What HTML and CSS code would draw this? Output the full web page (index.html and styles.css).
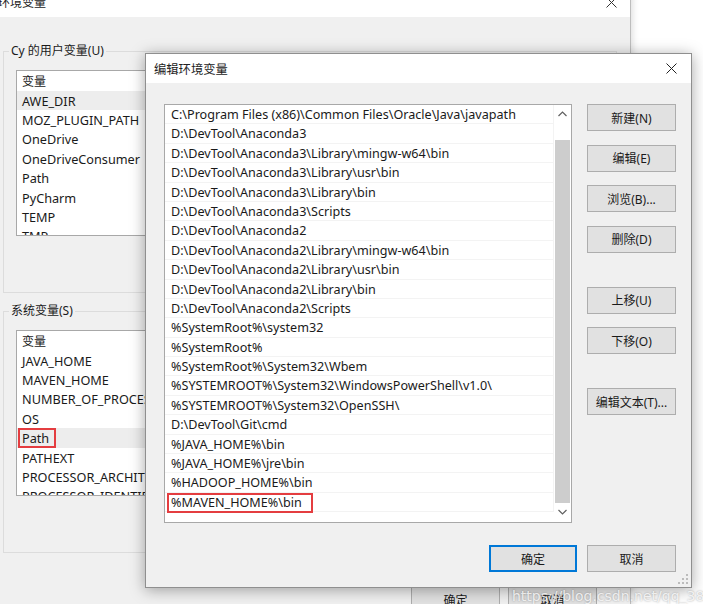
FILE: index.html
```html
<!DOCTYPE html>
<html lang="zh-CN">
<head>
    <meta charset="UTF-8">
    <title>编辑环境变量</title>
    <link rel="stylesheet" href="styles.css">
</head>
<body>
<div class="desktop">

    <!-- parent window: 环境变量 -->
    <div class="parent-win">
        <div class="titlebar">
            <span class="title">环境变量</span>
            <svg class="close" width="11" height="11" viewBox="0 0 11 11"><path d="M0.5 0.5 L10.5 10.5 M10.5 0.5 L0.5 10.5" stroke="#333" stroke-width="1"/></svg>
        </div>
        <div class="parent-body">
            <fieldset class="group">
                <legend>Cy 的用户变量(U)</legend>
                <div class="varlist">
                    <div class="vrow head">变量</div>
                    <div class="vrow sel">AWE_DIR</div>
                    <div class="vrow">MOZ_PLUGIN_PATH</div>
                    <div class="vrow">OneDrive</div>
                    <div class="vrow">OneDriveConsumer</div>
                    <div class="vrow">Path</div>
                    <div class="vrow">PyCharm</div>
                    <div class="vrow">TEMP</div>
                    <div class="vrow">TMP</div>
                </div>
            </fieldset>
            <fieldset class="group">
                <legend>系统变量(S)</legend>
                <div class="varlist">
                    <div class="vrow head">变量</div>
                    <div class="vrow">JAVA_HOME</div>
                    <div class="vrow">MAVEN_HOME</div>
                    <div class="vrow">NUMBER_OF_PROCESSORS</div>
                    <div class="vrow">OS</div>
                    <div class="vrow sel"><span class="mark mark-path">Path</span></div>
                    <div class="vrow">PATHEXT</div>
                    <div class="vrow">PROCESSOR_ARCHITECTURE</div>
                    <div class="vrow">PROCESSOR_IDENTIFIER</div>
                </div>
            </fieldset>
            <div class="parent-actions">
                <button class="btn">确定</button>
                <button class="btn">取消</button>
            </div>
        </div>
    </div>

    <!-- front dialog: 编辑环境变量 -->
    <div class="dialog">
        <div class="titlebar dlg-title">
            <span class="title">编辑环境变量</span>
            <svg class="close" width="11" height="11" viewBox="0 0 11 11"><path d="M0.5 0.5 L10.5 10.5 M10.5 0.5 L0.5 10.5" stroke="#222" stroke-width="1"/></svg>
        </div>
        <div class="dlg-body">
            <div class="dlg-main">
                <div class="pathlist">
                    <div class="rows">
                        <div class="prow">C:\Program Files (x86)\Common Files\Oracle\Java\javapath</div>
                        <div class="prow">D:\DevTool\Anaconda3</div>
                        <div class="prow">D:\DevTool\Anaconda3\Library\mingw-w64\bin</div>
                        <div class="prow">D:\DevTool\Anaconda3\Library\usr\bin</div>
                        <div class="prow">D:\DevTool\Anaconda3\Library\bin</div>
                        <div class="prow">D:\DevTool\Anaconda3\Scripts</div>
                        <div class="prow">D:\DevTool\Anaconda2</div>
                        <div class="prow">D:\DevTool\Anaconda2\Library\mingw-w64\bin</div>
                        <div class="prow">D:\DevTool\Anaconda2\Library\usr\bin</div>
                        <div class="prow">D:\DevTool\Anaconda2\Library\bin</div>
                        <div class="prow">D:\DevTool\Anaconda2\Scripts</div>
                        <div class="prow">%SystemRoot%\system32</div>
                        <div class="prow">%SystemRoot%</div>
                        <div class="prow">%SystemRoot%\System32\Wbem</div>
                        <div class="prow">%SYSTEMROOT%\System32\WindowsPowerShell\v1.0\</div>
                        <div class="prow">%SYSTEMROOT%\System32\OpenSSH\</div>
                        <div class="prow">D:\DevTool\Git\cmd</div>
                        <div class="prow">%JAVA_HOME%\bin</div>
                        <div class="prow">%JAVA_HOME%\jre\bin</div>
                        <div class="prow">%HADOOP_HOME%\bin</div>
                        <div class="prow"><span class="mark mark-maven">%MAVEN_HOME%\bin</span></div>
                    </div>
                    <div class="scrollbar">
                        <svg class="arrow" width="9" height="6" viewBox="0 0 9 6"><path d="M0.5 5 L4.5 1 L8.5 5" fill="none" stroke="#606060" stroke-width="1.2"/></svg>
                        <div class="thumb"></div>
                        <svg class="arrow" width="9" height="6" viewBox="0 0 9 6"><path d="M0.5 1 L4.5 5 L8.5 1" fill="none" stroke="#606060" stroke-width="1.2"/></svg>
                    </div>
                </div>
                <div class="side-btns">
                    <button class="btn">新建(N)</button>
                    <button class="btn">编辑(E)</button>
                    <button class="btn">浏览(B)...</button>
                    <button class="btn">删除(D)</button>
                    <button class="btn spaced">上移(U)</button>
                    <button class="btn">下移(O)</button>
                    <button class="btn spaced">编辑文本(T)...</button>
                </div>
            </div>
            <div class="dlg-actions">
                <button class="btn default">确定</button>
                <button class="btn">取消</button>
            </div>
        </div>
        <svg class="grip" width="10" height="10" viewBox="0 0 10 10">
            <rect x="8" y="0" width="2" height="2" fill="#bcbcbc"/>
            <rect x="4" y="4" width="2" height="2" fill="#bcbcbc"/>
            <rect x="8" y="4" width="2" height="2" fill="#bcbcbc"/>
            <rect x="0" y="8" width="2" height="2" fill="#bcbcbc"/>
            <rect x="4" y="8" width="2" height="2" fill="#bcbcbc"/>
            <rect x="8" y="8" width="2" height="2" fill="#bcbcbc"/>
        </svg>
    </div>

    <div class="watermark">https://blog.csdn.net/qq_38190160</div>
</div>
</body>
</html>
```

FILE: styles.css
```css
body {
    margin: 0;
    background: #ffffff;
    font-family: "Segoe UI", "Noto Sans", "Noto Sans CJK SC", sans-serif;
    font-size: 12px;
    color: #1a1a1a;
}

.desktop {
    position: relative;
    width: 703px;
    height: 604px;
    overflow: hidden;
}

/* windows */
.parent-win {
    position: absolute;
    left: -10px;
    top: -13px;
    width: 640px;
    height: 640px;
    background: #f0f0f0;
    border-right: 1px solid #bdbdbd;
    box-shadow: 2px 0 6px rgba(0, 0, 0, 0.12);
}

.titlebar {
    height: 30px;
    background: #ffffff;
    display: flex;
    align-items: center;
    justify-content: space-between;
    padding: 0 13px 0 8px;
}
.title {
    font-size: 12px;
    color: #222;
}

.parent-body {
    padding: 25px 13px 0 13px;
}

.group {
    margin: 0;
    padding: 10px 12px 56px 12px;
    border: 1px solid #dcdcdc;
}
.group + .group {
    margin-top: 9px;
}
.group legend {
    margin-left: -7px;
    padding: 0 2px;
    line-height: 18px;
    font-size: 12px;
}

.varlist {
    height: 164px;
    overflow: hidden;
    background: #ffffff;
    border: 1px solid #a8a8a8;
}
.vrow {
    box-sizing: border-box;
    height: 19.4px;
    line-height: 17.4px;
    padding: 2px 0 0 5px;
    font-size: 12.7px;
    white-space: nowrap;
}
.vrow.head {
    height: 19.6px;
    font-size: 12px;
}
.vrow.sel {
    background: #ededed;
}

.parent-actions {
    display: flex;
    justify-content: flex-end;
    gap: 8px;
    margin-top: 33px;
    padding-right: 20px;
}

/* buttons */
.btn {
    width: 89px;
    height: 27px;
    padding: 0;
    background: #e1e1e1;
    border: 1px solid #adadad;
    font-family: inherit;
    font-size: 12px;
    color: #1a1a1a;
}
.btn.default {
    width: 88px;
    border: 2px solid #0078d7;
}

/* dialog */
.dialog {
    position: absolute;
    left: 145px;
    top: 53px;
    width: 545px;
    height: 533px;
    background: #f0f0f0;
    border: 1px solid #8f8f8f;
    box-shadow: 0 2px 14px rgba(0, 0, 0, 0.35);
}
.dlg-title {
    height: 29px;
    padding-right: 14px;
}
.dlg-title .title {
    font-size: 12.3px;
}

.dlg-body {
    padding: 21px 15px 0 18px;
}
.dlg-main {
    display: flex;
    gap: 15px;
}

.pathlist {
    width: 406px;
    height: 417px;
    background: #ffffff;
    border: 1px solid #a8a8a8;
    display: flex;
}
.rows {
    flex: 1;
}
.prow {
    box-sizing: border-box;
    height: 19.4px;
    line-height: 16.4px;
    padding: 2px 0 0 6px;
    font-size: 12.6px;
    border-bottom: 1px solid #f3f3f3;
    border-right: 1px solid #f3f3f3;
    white-space: nowrap;
}

.scrollbar {
    width: 17px;
    background: #ffffff;
    display: flex;
    flex-direction: column;
    align-items: center;
}
.scrollbar .arrow {
    margin: 6px 0 5px;
}
.thumb {
    width: 15px;
    height: 363px;
    margin-top: 18px;
    background: #cdcdcd;
}
.scrollbar .arrow:last-child {
    margin-top: 6px;
}

.mark {
    display: inline-block;
    height: 20px;
    line-height: 16px;
    box-sizing: border-box;
    border: 2px solid #e43d40;
    vertical-align: top;
    margin-top: -2px;
}
.mark-maven {
    margin-left: -4px;
    padding: 0 9px 0 2px;
}
.mark-path {
    margin-left: -4px;
    padding: 0 5px 0 2px;
}

.side-btns {
    display: flex;
    flex-direction: column;
    gap: 13.5px;
}
.side-btns .spaced {
    margin-top: 20.5px;
}

.dlg-actions {
    display: flex;
    justify-content: flex-end;
    gap: 10px;
    margin-top: 22px;
}

.grip {
    position: absolute;
    right: 3px;
    bottom: 3px;
}

.watermark {
    position: absolute;
    left: 512px;
    top: 588px;
    font-family: "DejaVu Sans", sans-serif;
    font-size: 14px;
    color: rgba(255, 255, 255, 0.8);
    text-shadow: 0 0 2px rgba(0, 0, 0, 0.35);
    white-space: nowrap;
}
```
